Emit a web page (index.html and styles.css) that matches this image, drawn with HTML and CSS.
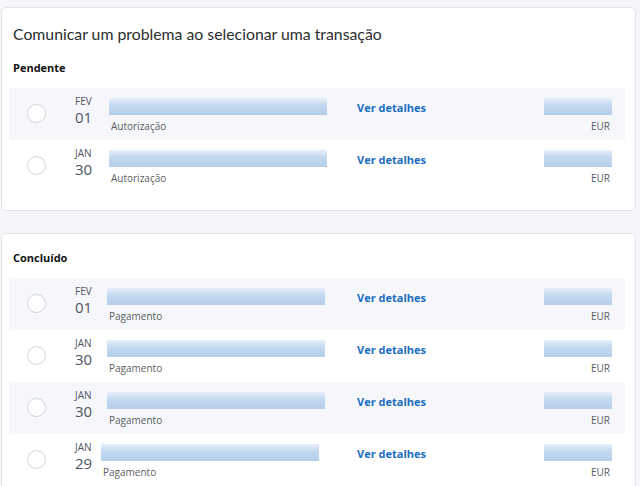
FILE: index.html
```html
<!DOCTYPE html>
<html lang="pt">
<head>
    <meta charset="UTF-8">
    <meta name="viewport" content="width=device-width, initial-scale=1.0">
    <title>Comunicar um problema</title>
    <link rel="stylesheet" href="styles.css">
</head>
<body>
    <!-- Pending transactions -->
    <div class="card">
        <h1 class="card-title">Comunicar um problema ao selecionar uma transação</h1>
        <h2 class="section-label">Pendente</h2>
        <div class="tx-list">
            <div class="tx-row">
                <span class="radio"></span>
                <div class="tx-date"><span class="month">FEV</span><span class="day">01</span></div>
                <div class="tx-desc"><div class="redacted name"></div><span class="tx-type">Autorização</span></div>
                <a class="tx-link" href="#">Ver detalhes</a>
                <div class="tx-amount"><div class="redacted amount"></div><span class="currency">EUR</span></div>
            </div>
            <div class="tx-row">
                <span class="radio"></span>
                <div class="tx-date"><span class="month">JAN</span><span class="day">30</span></div>
                <div class="tx-desc"><div class="redacted name"></div><span class="tx-type">Autorização</span></div>
                <a class="tx-link" href="#">Ver detalhes</a>
                <div class="tx-amount"><div class="redacted amount"></div><span class="currency">EUR</span></div>
            </div>
        </div>
    </div>

    <!-- Completed transactions -->
    <div class="card">
        <h2 class="section-label first">Concluído</h2>
        <div class="tx-list">
            <div class="tx-row">
                <span class="radio"></span>
                <div class="tx-date"><span class="month">FEV</span><span class="day">01</span></div>
                <div class="tx-desc shift-2"><div class="redacted name"></div><span class="tx-type">Pagamento</span></div>
                <a class="tx-link" href="#">Ver detalhes</a>
                <div class="tx-amount"><div class="redacted amount"></div><span class="currency">EUR</span></div>
            </div>
            <div class="tx-row">
                <span class="radio"></span>
                <div class="tx-date"><span class="month">JAN</span><span class="day">30</span></div>
                <div class="tx-desc shift-2"><div class="redacted name"></div><span class="tx-type">Pagamento</span></div>
                <a class="tx-link" href="#">Ver detalhes</a>
                <div class="tx-amount"><div class="redacted amount"></div><span class="currency">EUR</span></div>
            </div>
            <div class="tx-row">
                <span class="radio"></span>
                <div class="tx-date"><span class="month">JAN</span><span class="day">30</span></div>
                <div class="tx-desc shift-2"><div class="redacted name"></div><span class="tx-type">Pagamento</span></div>
                <a class="tx-link" href="#">Ver detalhes</a>
                <div class="tx-amount"><div class="redacted amount"></div><span class="currency">EUR</span></div>
            </div>
            <div class="tx-row">
                <span class="radio"></span>
                <div class="tx-date"><span class="month">JAN</span><span class="day">29</span></div>
                <div class="tx-desc shift-8"><div class="redacted name"></div><span class="tx-type">Pagamento</span></div>
                <a class="tx-link" href="#">Ver detalhes</a>
                <div class="tx-amount"><div class="redacted amount"></div><span class="currency">EUR</span></div>
            </div>
        </div>
    </div>
</body>
</html>
```

FILE: styles.css
```css
:root {
    --page-bg: #f5f6f9;
    --row-alt: #f5f7fa;
    --border-color: #e3e5e9;
    --link-color: #1a6dc0;
    --text-dark: #2c2e2f;
    --text-muted: #5a5e63;
}

body {
    font-family: 'Open Sans', 'Noto Sans', sans-serif;
    margin: 0;
    padding: 7px 4px 0 1px;
    background-color: var(--page-bg);
    color: var(--text-dark);
}

.card {
    background-color: white;
    border: 1px solid var(--border-color);
    border-radius: 5px;
    padding: 0 10px 18px 7px;
    margin-bottom: 22px;
}

.card-title {
    font-family: Lato, 'Open Sans', sans-serif;
    font-size: 15.8px;
    font-weight: normal;
    margin: 0;
    padding: 15px 0 0 4px;
    line-height: 22px;
    color: var(--text-dark);
}

.section-label {
    font-size: 11px;
    font-weight: bold;
    margin: 0;
    padding: 15px 0 0 4px;
    line-height: 16px;
    color: #111;
}

.section-label.first {
    padding-top: 16px;
}

.tx-list {
    margin-top: 12px;
}

.tx-row {
    display: grid;
    grid-template-columns: 66px 34px 248px 1fr 68px;
    align-items: start;
    height: 52px;
    padding-right: 13px;
}

.tx-row:nth-child(odd) {
    background-color: var(--row-alt);
}

.radio {
    width: 17px;
    height: 17px;
    margin: 16px 0 0 18px;
    border: 1px solid #d3d6da;
    border-radius: 50%;
    background-color: white;
}

.tx-date {
    display: flex;
    flex-direction: column;
    padding-top: 7px;
    color: #4f5660;
}

.tx-date .month {
    font-size: 10px;
    line-height: 13px;
}

.tx-date .day {
    font-size: 15px;
    line-height: 18px;
}

.tx-desc {
    padding-top: 10px;
}

.tx-desc.shift-2 {
    margin-left: -2px;
}

.tx-desc.shift-8 {
    margin-left: -8px;
}

.redacted {
    height: 17px;
    background: linear-gradient(to bottom, #e8f0f9 0%, #c6daf0 40%, #b3cdea 100%);
}

.redacted.name {
    width: 218px;
}

.redacted.amount {
    width: 68px;
}

.tx-type {
    display: block;
    font-size: 10px;
    line-height: 14px;
    margin: 4px 0 0 2px;
    color: var(--text-muted);
}

.tx-link {
    padding-top: 12px;
    font-size: 11px;
    font-weight: bold;
    line-height: 16px;
    color: var(--link-color);
    text-decoration: none;
}

.tx-amount {
    padding-top: 10px;
    text-align: right;
}

.currency {
    display: block;
    font-size: 10px;
    line-height: 14px;
    margin: 4px 2px 0 0;
    color: var(--text-muted);
}
```
